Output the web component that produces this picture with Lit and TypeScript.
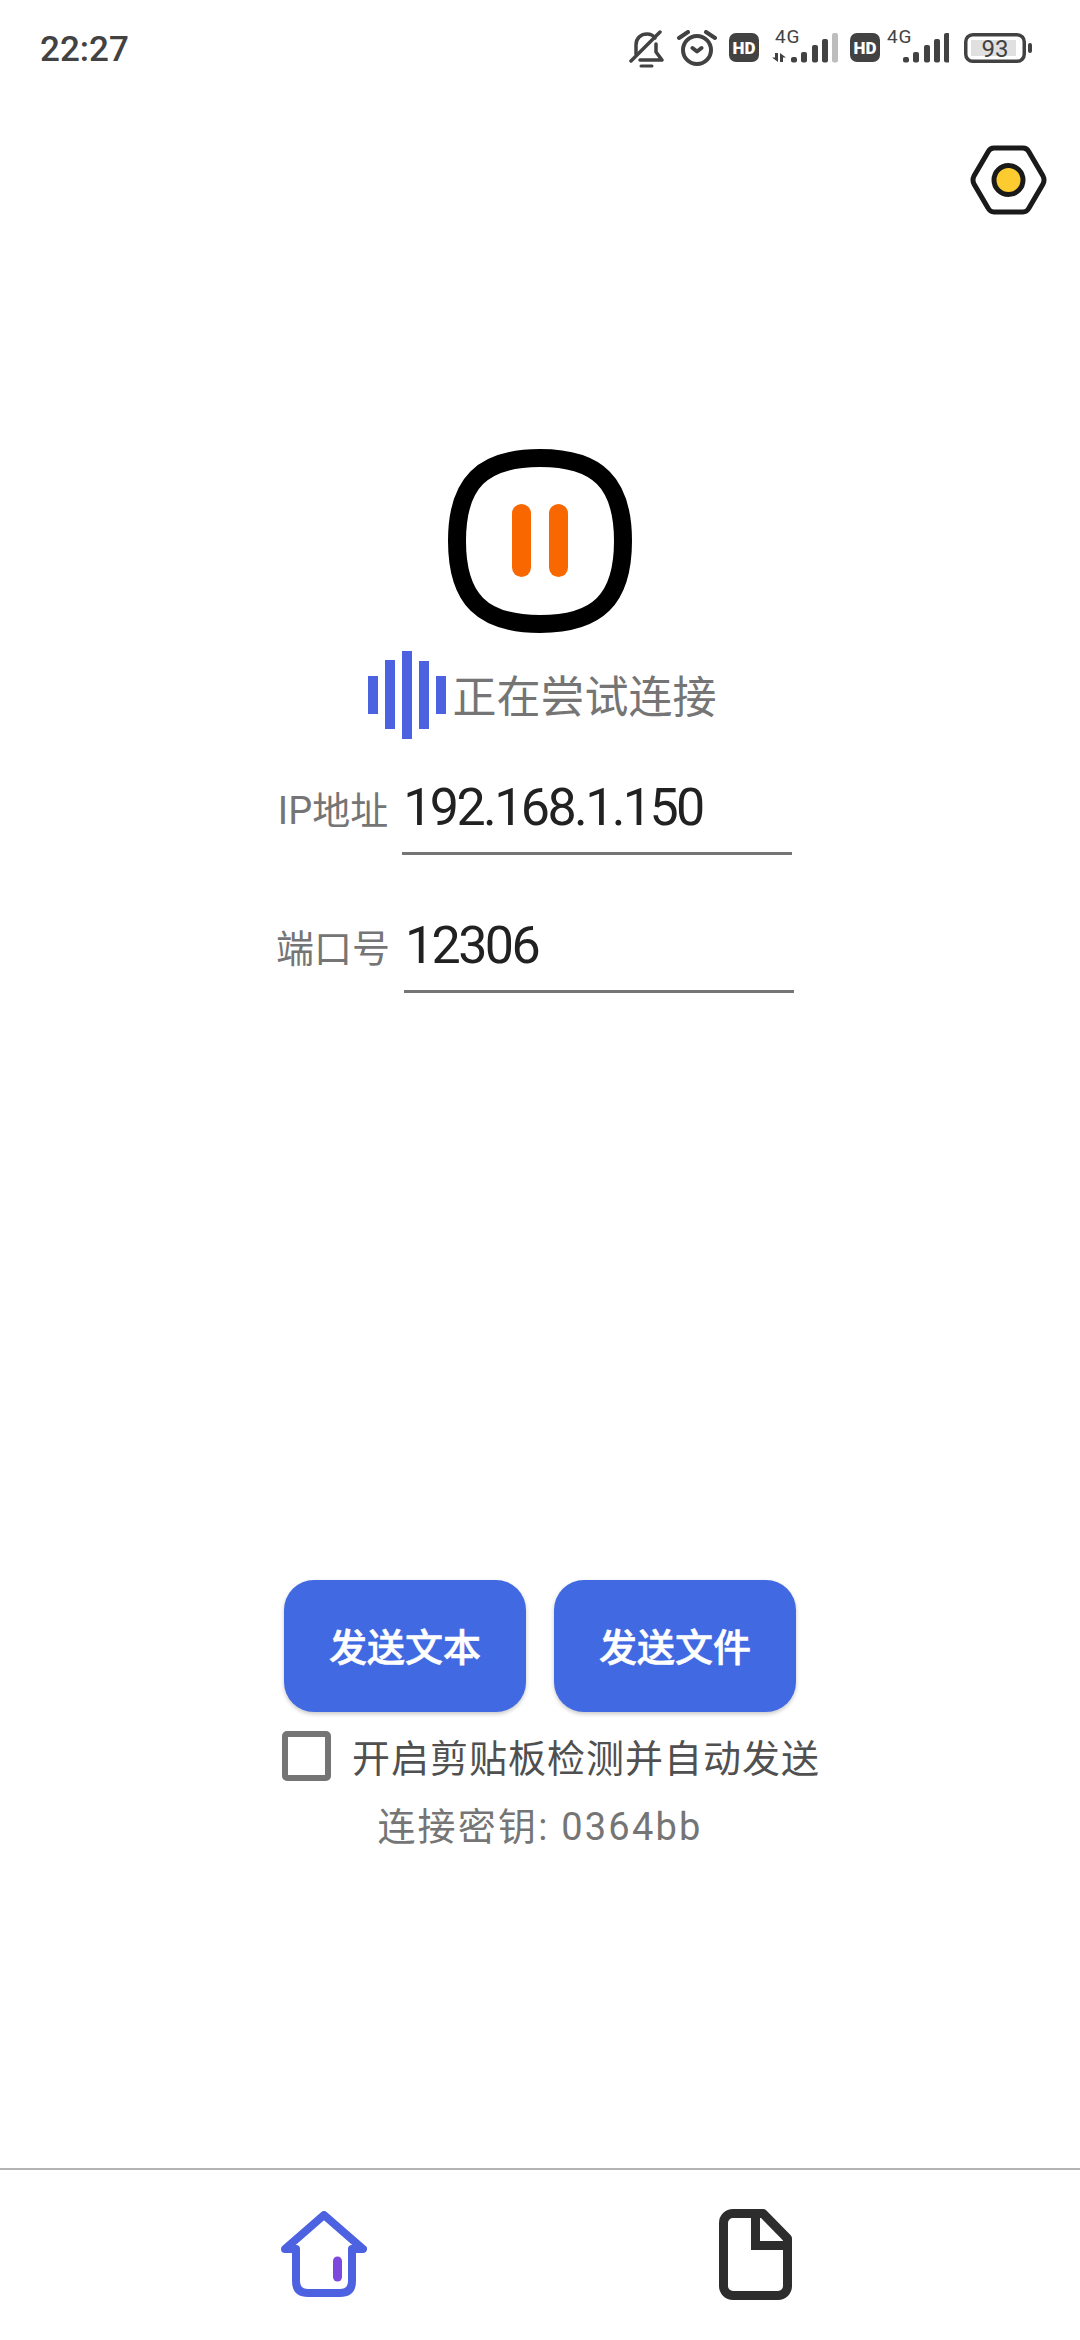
import { LitElement, html, svg, css } from 'lit';
import { customElement } from 'lit/decorators.js';

const WAVE_BARS = [
  { x: 0, y: 25, h: 38 },
  { x: 17, y: 9, h: 69 },
  { x: 34, y: 0, h: 88 },
  { x: 51, y: 10, h: 68 },
  { x: 68, y: 25, h: 38 }
];

// x offset and top of each signal bar, bottom is always 32.5
const signalBars = (start: number) => [
  { x: start, y: 27 },
  { x: start + 10, y: 22 },
  { x: start + 21, y: 15 },
  { x: start + 31, y: 9 },
  { x: start + 41, y: 3 }
];

@customElement('app-root')
export class AppRoot extends LitElement {
  static styles = css`
    :host {
      display: flex;
      flex-direction: column;
      width: 1080px;
      height: 2340px;
      background: #fff;
      font-family: Roboto, 'Noto Sans CJK SC', sans-serif;
      color: #757575;
    }

    svg {
      display: block;
      flex: none;
    }

    .status-bar {
      display: flex;
      justify-content: space-between;
      align-items: center;
      height: 38px;
      padding: 30px 48px 0 40px;
    }

    .time {
      font-size: 35px;
      font-weight: 500;
      color: #424242;
    }

    .status-icons {
      display: flex;
      align-items: flex-start;
      gap: 12px;
    }

    .hd {
      margin-top: 3px;
    }

    .signal {
      margin-top: -5px;
    }

    .tight {
      margin-left: -5px;
    }

    .battery {
      margin-left: 3px;
      margin-top: 3px;
    }

    .settings {
      display: flex;
      justify-content: flex-end;
      margin-top: 77px;
      padding-right: 33px;
    }

    .logo {
      display: flex;
      justify-content: center;
      margin-top: 234px;
    }

    .state {
      display: flex;
      justify-content: center;
      align-items: center;
      gap: 7px;
      margin-top: 18px;
      padding-left: 4px;
      height: 88px;
      font-size: 44px;
      line-height: 88px;
    }

    .state-text {
      padding-top: 5px;
    }

    .form-row {
      display: flex;
      justify-content: center;
      align-items: flex-start;
      gap: 14px;
      padding-right: 10px;
      margin-top: 60px;
    }

    .form-row.first {
      margin-top: 38px;
    }

    .form-label {
      margin-top: 9px;
      font-size: 38px;
      line-height: 50px;
    }

    .field {
      width: 390px;
      padding: 1px 0 14px 1px;
      box-sizing: border-box;
      border-bottom: 3px solid #757575;
      font-size: 52px;
      line-height: 60px;
      letter-spacing: -2.6px;
      color: #212121;
    }

    .actions {
      display: flex;
      justify-content: center;
      gap: 28px;
      margin-top: 587px;
    }

    .action {
      display: flex;
      justify-content: center;
      align-items: center;
      width: 242px;
      height: 132px;
      box-sizing: border-box;
      padding-bottom: 3px;
      border-radius: 30px;
      background: #4169e1;
      box-shadow: 0 2px 4px rgba(0, 0, 0, 0.22);
      color: #fff;
      font-size: 38px;
      font-weight: 500;
      -webkit-text-stroke: 0.6px #fff;
    }

    .clipboard {
      display: flex;
      align-items: center;
      gap: 21px;
      margin-top: 19px;
      padding-left: 282px;
      height: 50px;
      color: #505050;
      font-size: 38px;
      line-height: 44px;
      letter-spacing: 1px;
    }

    .clipboard-text {
      padding-top: 6px;
    }

    .checkbox {
      flex: none;
      width: 49px;
      height: 50px;
      box-sizing: border-box;
      border: 6px solid #757575;
      border-radius: 5px;
    }

    .secret {
      margin-top: 21px;
      text-align: center;
      font-size: 38px;
      line-height: 50px;
      letter-spacing: 2.2px;
    }

    .nav {
      display: flex;
      justify-content: space-between;
      align-items: center;
      margin-top: auto;
      height: 172px;
      box-sizing: border-box;
      padding: 0 288px 2px 281px;
      border-top: 2px solid #b4b4b4;
    }
  `;

  private renderSignal(start: number, width: number, lastFaded: boolean, glyphX: number) {
    const bars = signalBars(start);
    return html`
      <svg class="signal" width=${width} height="39" viewBox="0 -5 ${width} 39">
        <text x=${glyphX} y="13" font-family="Roboto" font-size="19" letter-spacing="0.8" fill="#424242">4G</text>
        ${bars.map(
          (b, i) => svg`<rect
            x=${b.x}
            y=${b.y}
            width="6"
            height=${32.5 - b.y}
            rx="2"
            fill=${lastFaded && i === 4 ? '#bdbdbd' : '#424242'}
          ></rect>`
        )}
        ${lastFaded
          ? svg`<path d="M7 32L1 27.500H4V23H7ZM9 23L15 27.500H12V32H9Z" fill="#424242"></path>`
          : ''}
      </svg>
    `;
  }

  private renderHd() {
    return html`
      <svg class="hd" width="30" height="29" viewBox="0 0 30 29">
        <rect width="30" height="29" rx="7" fill="#424242"></rect>
        <text x="15" y="20.500" text-anchor="middle" font-family="Roboto" font-weight="900" font-size="17" fill="#fff">HD</text>
      </svg>
    `;
  }

  private renderStatusBar() {
    return html`
      <div class="status-bar">
        <span class="time">22:27</span>
        <div class="status-icons">
          <svg width="36" height="38" viewBox="0 0 36 38" fill="none" stroke="#424242" stroke-width="3.500" stroke-linecap="round" stroke-linejoin="round">
            <path d="M7 24V15C7 8 12 4 18 4c3 0 6 1 8 4"></path>
            <path d="M27 14v8l6 8H11"></path>
            <path d="M31 2L2 31"></path>
            <path d="M12 36h11" stroke-width="3"></path>
          </svg>
          <svg width="40" height="36" viewBox="0 0 40 36" fill="none" stroke="#424242" stroke-width="4" stroke-linecap="round" stroke-linejoin="round">
            <circle cx="20" cy="20" r="14"></circle>
            <path d="M2 8l9-6M38 8l-9-6M15.500 18l4.500 3.500 4.500-3.500"></path>
          </svg>
          ${this.renderHd()}
          ${this.renderSignal(20, 67, true, 4)}
          ${this.renderHd()}
          <div class="tight">${this.renderSignal(16, 62, false, 0)}</div>
          <svg class="battery" width="68" height="30" viewBox="0 0 68 30">
            <rect x="1.750" y="1.750" width="58.500" height="26.500" rx="7" fill="none" stroke="#424242" stroke-width="3.500"></rect>
            <rect x="7" y="7" width="45" height="16" fill="#e0e0e0"></rect>
            <rect x="64" y="10" width="4" height="10" rx="2" fill="#424242"></rect>
            <text x="31" y="23.500" text-anchor="middle" font-family="Roboto" font-size="24" fill="#424242">93</text>
          </svg>
        </div>
      </div>
    `;
  }

  render() {
    return html`
      ${this.renderStatusBar()}

      <div class="settings">
        <svg width="77" height="70" viewBox="0 0 77 70" fill="none" stroke="#1a1a1a" stroke-width="5">
          <path d="M24 3H53Q57 3 59 7L73 31Q75 35 73 39L59 63Q57 67 53 67H24Q20 67 18 63L4 39Q2 35 4 31L18 7Q20 3 24 3Z"></path>
          <circle cx="38.500" cy="35" r="14.500" fill="#fccb2f"></circle>
        </svg>
      </div>

      <div class="logo">
        <svg width="184" height="184" viewBox="0 0 184 184">
          <path d="M92 9C150 9 175 34 175 92C175 150 150 175 92 175C34 175 9 150 9 92C9 34 34 9 92 9Z" fill="none" stroke="#000" stroke-width="18"></path>
          <rect x="64" y="55" width="19" height="73" rx="9.500" fill="#f96800"></rect>
          <rect x="101" y="55" width="19" height="73" rx="9.500" fill="#f96800"></rect>
        </svg>
      </div>

      <div class="state">
        <svg width="78" height="88" viewBox="0 0 78 88">
          ${WAVE_BARS.map(b => svg`<rect x=${b.x} y=${b.y} width="10" height=${b.h} fill="#4d62e0"></rect>`)}
        </svg>
        <span class="state-text">正在尝试连接</span>
      </div>

      <div class="form-row first">
        <span class="form-label">IP地址</span>
        <div class="field">192.168.1.150</div>
      </div>
      <div class="form-row">
        <span class="form-label">端口号</span>
        <div class="field">12306</div>
      </div>

      <div class="actions">
        <div class="action">发送文本</div>
        <div class="action">发送文件</div>
      </div>

      <div class="clipboard">
        <span class="checkbox"></span>
        <span class="clipboard-text">开启剪贴板检测并自动发送</span>
      </div>

      <div class="secret">连接密钥: 0364bb</div>

      <div class="nav">
        <svg width="86" height="86" viewBox="0 0 86 86" fill="none" stroke="#4d62e0" stroke-width="8" stroke-linecap="round" stroke-linejoin="round">
          <path d="M15 38H4L43 4L82 38H71V70Q71 82 59 82H27Q15 82 15 70Z"></path>
          <path d="M56.500 50V66" stroke="#7e48df" stroke-width="9"></path>
        </svg>
        <svg width="73" height="91" viewBox="0 0 73 91" fill="none" stroke="#2d2d2d" stroke-width="9">
          <path d="M44 4.500H14A9.500 9.500 0 0 0 4.500 14V77A9.500 9.500 0 0 0 14 86.500H59A9.500 9.500 0 0 0 68.500 77V29.500Z" stroke-linejoin="round"></path>
          <path d="M36.500 4.500V36.500H68.500"></path>
        </svg>
      </div>
    `;
  }
}

declare global {
  interface HTMLElementTagNameMap {
    'app-root': AppRoot;
  }
}
